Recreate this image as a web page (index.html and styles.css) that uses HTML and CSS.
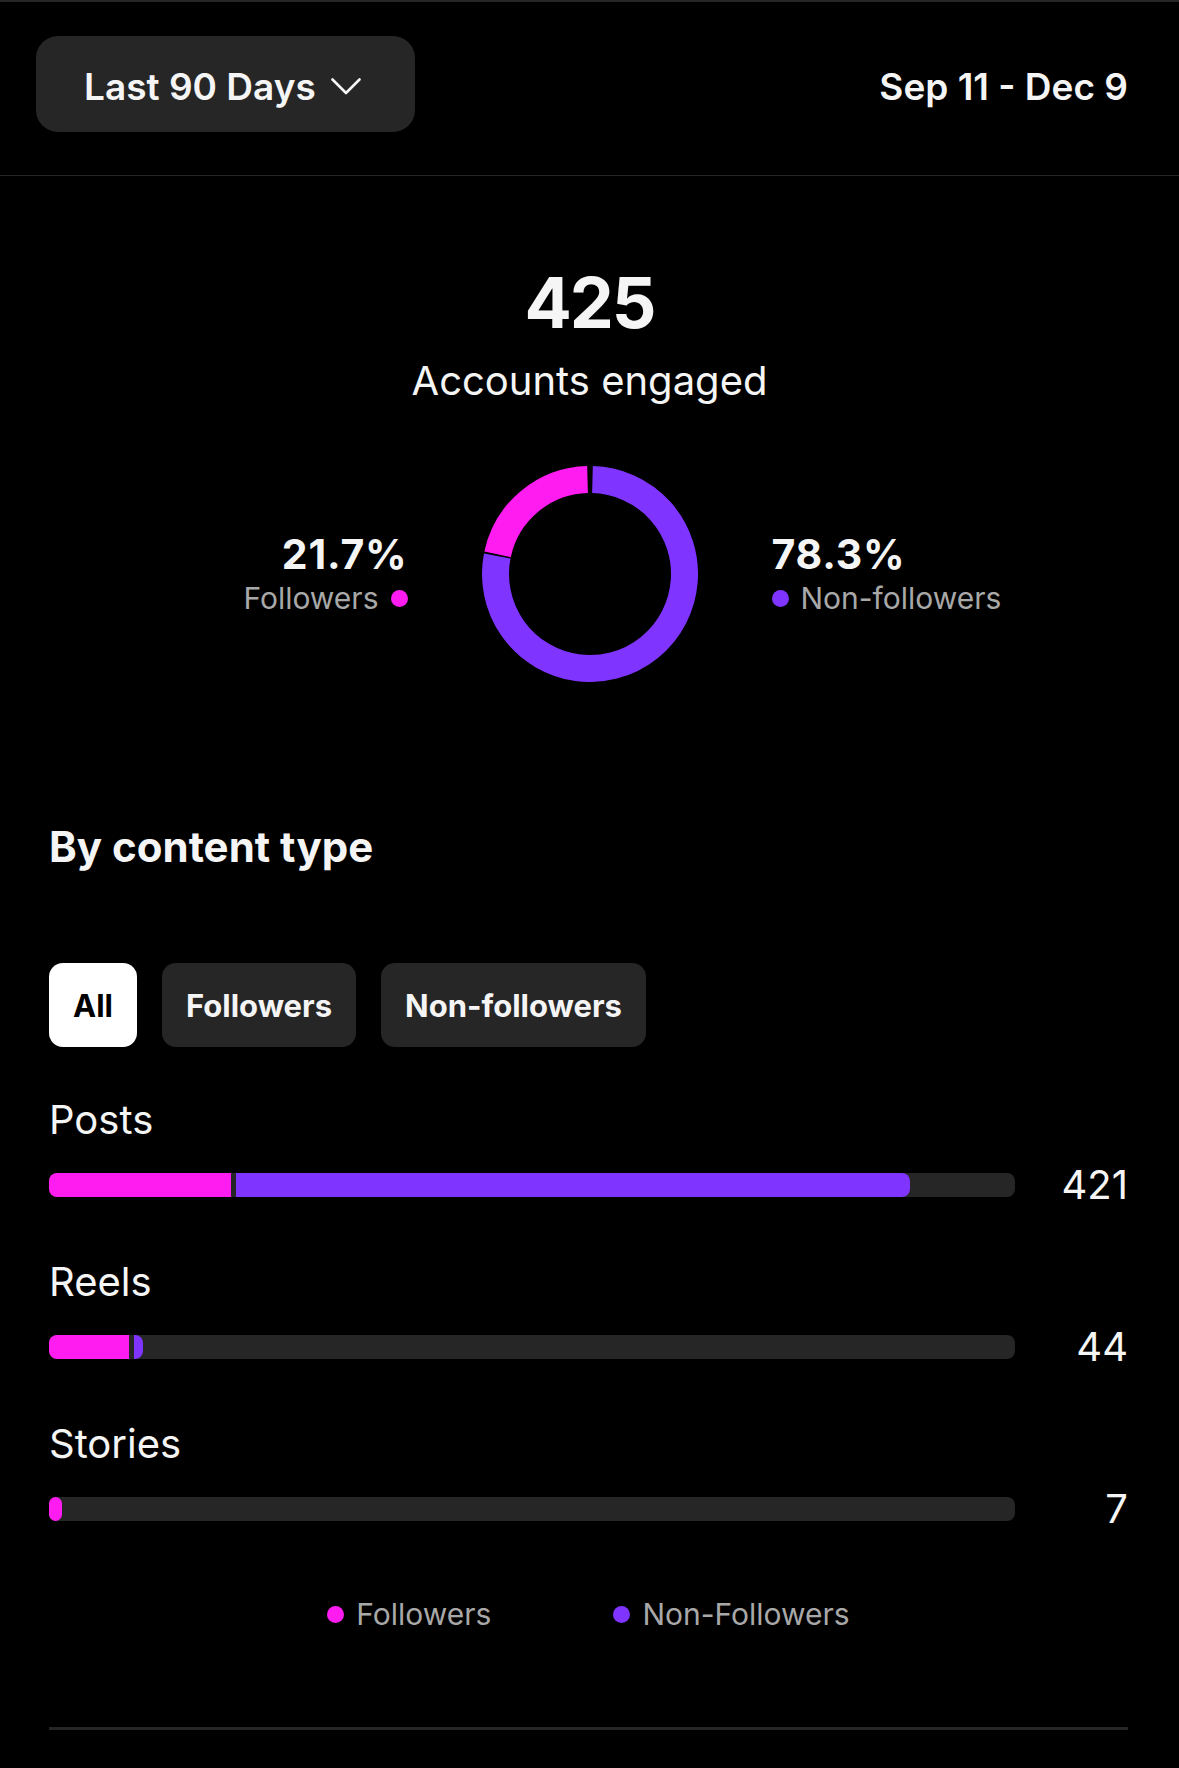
FILE: index.html
```html
<!DOCTYPE html>
<html lang="en">
<head>
    <meta charset="UTF-8">
    <meta name="viewport" content="width=device-width, initial-scale=1.0">
    <title>Accounts engaged</title>
    <link rel="stylesheet" href="styles.css">
</head>
<body>
    <header class="top-bar">
        <button class="range-btn">
            Last 90 Days
            <svg class="chevron" width="30" height="17" viewBox="0 0 30 17">
                <path d="M1.5 1.5 L15 15 L28.5 1.5" fill="none" stroke="#f5f5f5" stroke-width="2.6" stroke-linecap="round" stroke-linejoin="round"/>
            </svg>
        </button>
        <div class="date-range">Sep 11 - Dec 9</div>
    </header>

    <section class="summary">
        <div class="total">425</div>
        <div class="total-label">Accounts engaged</div>

        <div class="donut-row">
            <div class="stat stat-left">
                <div class="stat-value">21.7%</div>
                <div class="stat-label">Followers <span class="dot dot-pink"></span></div>
            </div>
            <svg class="donut" width="216" height="216" viewBox="0 0 216 216">
                <path d="M110.47 13.53 A94.5 94.5 0 1 1 15.24 89.97" fill="none" stroke="#7f35ff" stroke-width="27"/>
                <path d="M15.56 88.35 A94.5 94.5 0 0 1 105.53 13.53" fill="none" stroke="#ff1cf1" stroke-width="27"/>
            </svg>
            <div class="stat stat-right">
                <div class="stat-value">78.3%</div>
                <div class="stat-label"><span class="dot dot-purple"></span> Non-followers</div>
            </div>
        </div>
    </section>

    <section class="content-type">
        <h2 class="section-title">By content type</h2>

        <div class="tabs">
            <button class="tab tab-active">All</button>
            <button class="tab">Followers</button>
            <button class="tab">Non-followers</button>
        </div>

        <div class="type-row">
            <div class="type-name">Posts</div>
            <div class="bar-line">
                <div class="bar">
                    <div class="seg seg-pink" style="width: 182px"></div>
                    <div class="seg seg-purple" style="width: 674px"></div>
                </div>
                <div class="type-count">421</div>
            </div>
        </div>

        <div class="type-row">
            <div class="type-name">Reels</div>
            <div class="bar-line">
                <div class="bar">
                    <div class="seg seg-pink" style="width: 80px"></div>
                    <div class="seg seg-purple" style="width: 9px"></div>
                </div>
                <div class="type-count">44</div>
            </div>
        </div>

        <div class="type-row">
            <div class="type-name">Stories</div>
            <div class="bar-line">
                <div class="bar">
                    <div class="seg seg-pink seg-only" style="width: 13px"></div>
                </div>
                <div class="type-count">7</div>
            </div>
        </div>

        <div class="legend">
            <div class="legend-item"><span class="dot dot-pink"></span>Followers</div>
            <div class="legend-item"><span class="dot dot-purple"></span>Non-Followers</div>
        </div>

        <div class="bottom-rule"></div>
    </section>
</body>
</html>
```

FILE: styles.css
```css
body {
    margin: 0;
    background-color: #000;
    color: #f5f5f5;
    font-family: Inter, "Noto Sans", sans-serif;
}

.top-bar {
    display: flex;
    justify-content: space-between;
    align-items: center;
    padding: 34px 51px 43px 36px;
    border-top: 2px solid #262626;
    border-bottom: 1px solid #262626;
}

.range-btn {
    display: flex;
    align-items: center;
    gap: 15px;
    width: 379px;
    height: 96px;
    padding: 4px 0 0 48px;
    border: none;
    border-radius: 22px;
    background-color: #262626;
    color: #f5f5f5;
    font-family: inherit;
    font-size: 37px;
    font-weight: 600;
}

.date-range {
    margin-top: 4px;
    font-size: 37px;
    font-weight: 600;
}

.summary {
    text-align: center;
    padding-top: 92px;
}

.total {
    font-size: 70px;
    font-weight: 700;
    line-height: 1;
    letter-spacing: -2px;
}

.total-label {
    margin-top: 19px;
    font-size: 40px;
    line-height: 1.2;
}

.donut-row {
    display: grid;
    grid-template-columns: 1fr auto 1fr;
    align-items: center;
    gap: 74px;
    margin-top: 61px;
}

.stat {
    text-align: left;
}

.stat-left {
    justify-self: end;
    text-align: right;
}

.stat-value {
    font-size: 41px;
    font-weight: 700;
    line-height: 1.2;
    letter-spacing: 0.8px;
}

.stat-label {
    display: flex;
    align-items: center;
    gap: 12px;
    font-size: 30px;
    color: #a8a8a8;
    line-height: 1.3;
}

.dot {
    display: inline-block;
    width: 17px;
    height: 17px;
    border-radius: 50%;
}

.dot-pink {
    background-color: #ff1cf1;
}

.dot-purple {
    background-color: #7f35ff;
}

.content-type {
    padding: 0 51px 0 49px;
    margin-top: 140px;
}

.section-title {
    margin: 0;
    font-size: 42px;
    font-weight: 700;
    line-height: 1.2;
}

.tabs {
    display: flex;
    gap: 25px;
    margin-top: 91px;
}

.tab {
    height: 84px;
    padding: 0 24px;
    border: none;
    border-radius: 14px;
    background-color: #262626;
    color: #f5f5f5;
    font-family: inherit;
    font-size: 31px;
    font-weight: 700;
}

.tab-active {
    background-color: #fff;
    color: #000;
}

.type-row {
    margin-top: 49px;
}

.type-row:first-of-type {
    margin-top: 50px;
}

.type-name {
    font-size: 40px;
    line-height: 1.2;
}

.bar-line {
    display: flex;
    align-items: center;
    margin-top: 16px;
}

.bar {
    display: flex;
    gap: 5px;
    flex: 1;
    height: 24px;
    border-radius: 8px;
    background-color: #262626;
}

.seg {
    height: 100%;
}

.seg-pink {
    background-color: #ff1cf1;
    border-radius: 8px 0 0 8px;
}

.seg-purple {
    background-color: #7f35ff;
    border-radius: 0 8px 8px 0;
}

.seg-only {
    border-radius: 8px;
}

.type-count {
    width: 113px;
    text-align: right;
    font-size: 40px;
}

.legend {
    display: flex;
    justify-content: center;
    gap: 122px;
    margin-top: 63px;
}

.legend-item {
    display: flex;
    align-items: center;
    gap: 12px;
    font-size: 30px;
    color: #a8a8a8;
}

.bottom-rule {
    height: 3px;
    margin-top: 95px;
    background-color: #262626;
}
```
